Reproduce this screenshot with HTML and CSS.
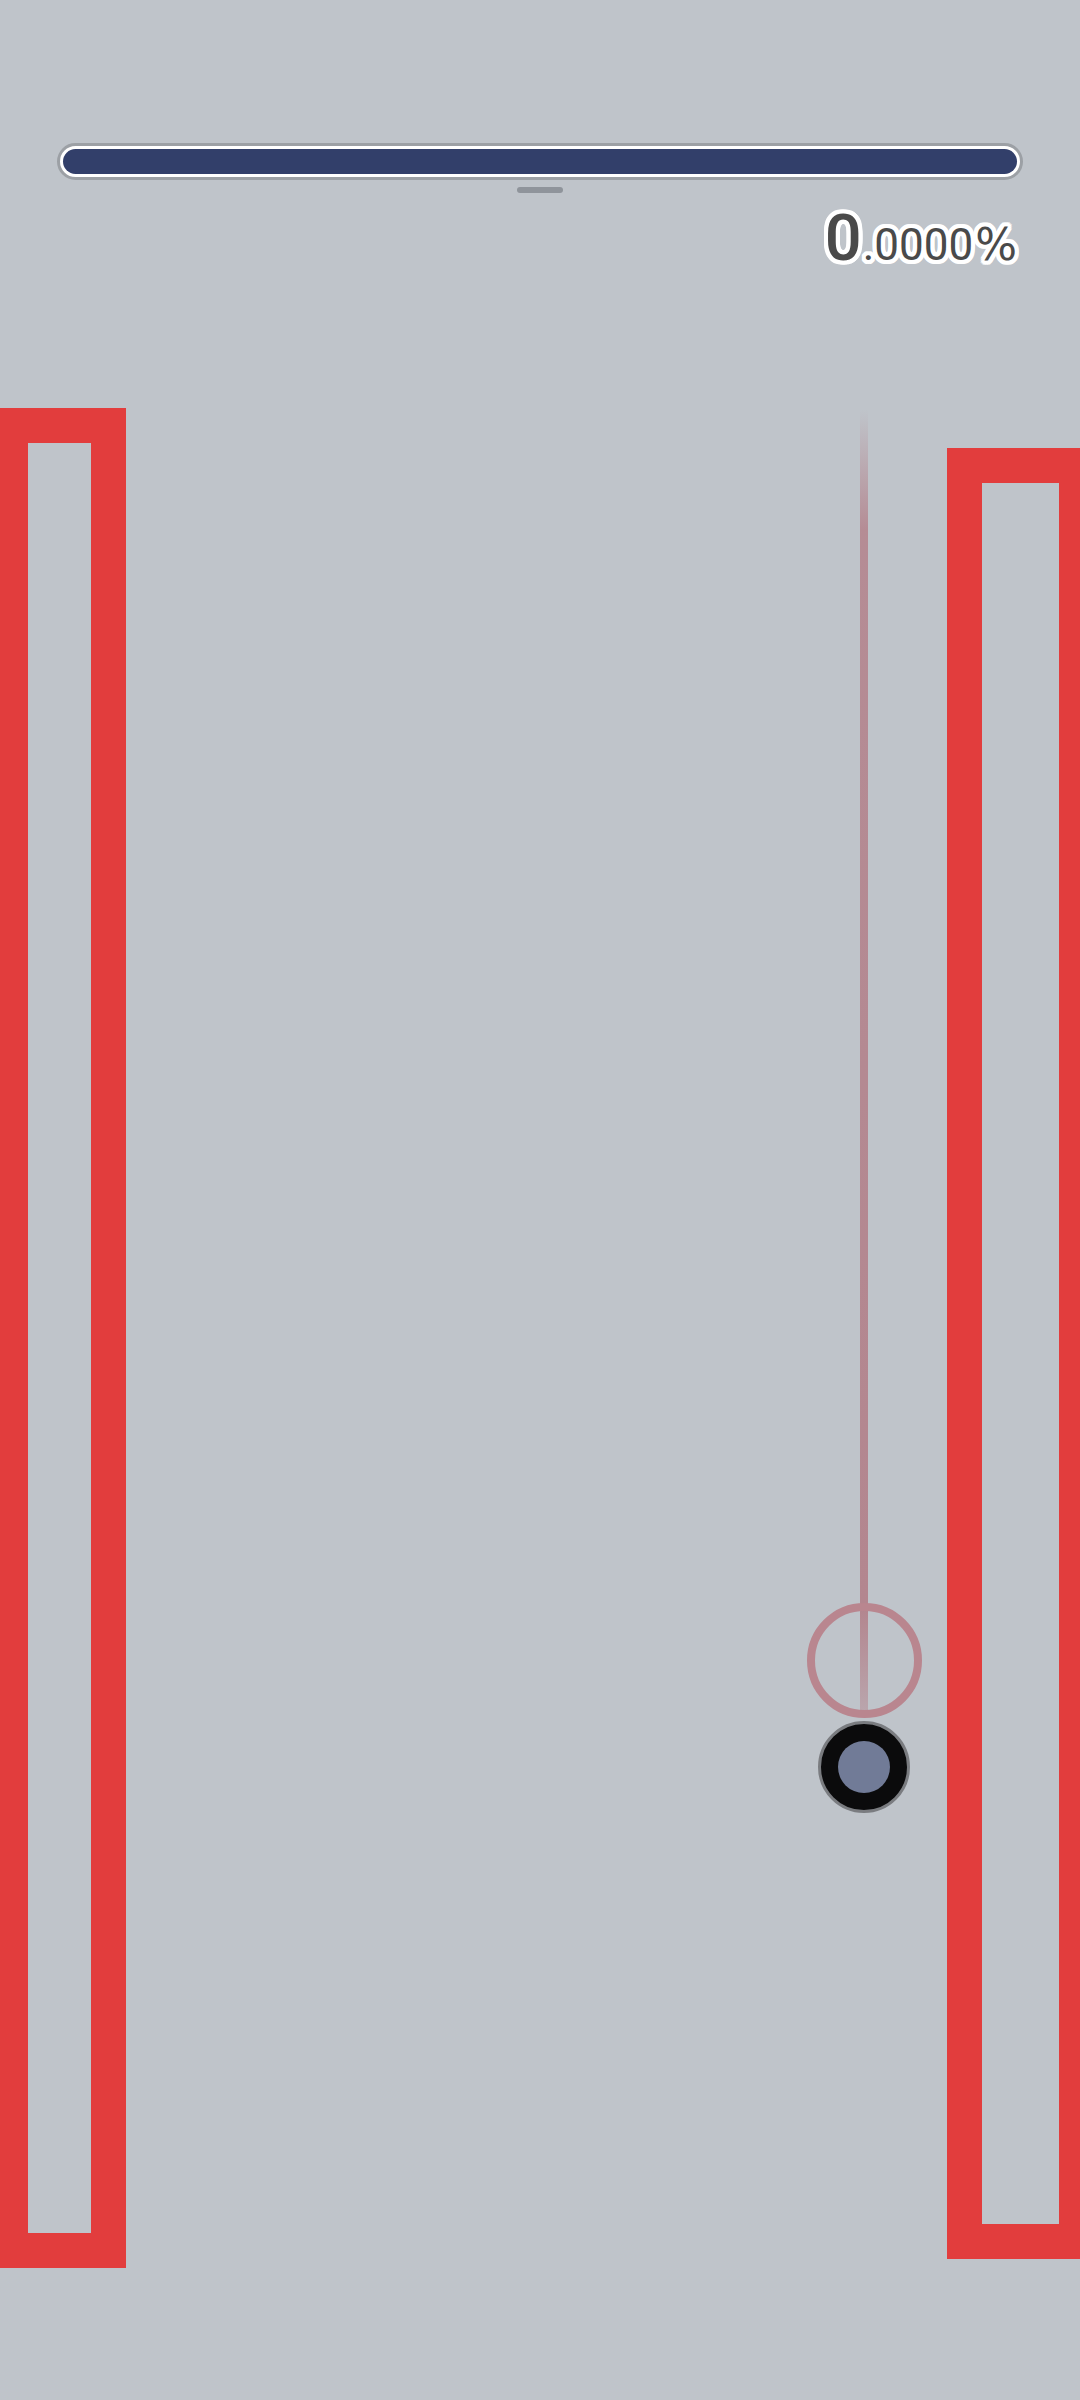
FILE: index.html
```html
<!DOCTYPE html>
<html>
<head>
<meta charset="utf-8">
<link rel="stylesheet" href="styles.css">
</head>
<body>
<div class="screen">
  <header class="hud">
    <div class="bar"><div class="fill"></div></div>
    <div class="handle"></div>
    <div class="score"><span class="big">0</span><span class="small">.0000</span><span class="pct">%</span></div>
  </header>
  <main class="field">
    <div class="hold hold-left"></div>
    <div class="hold hold-right"></div>
    <div class="trail"></div>
    <div class="target"></div>
    <div class="cursor"><div class="cursor-core"></div></div>
  </main>
</div>
</body>
</html>
```
FILE: styles.css
```css
html, body {
  margin: 0;
  padding: 0;
}
body {
  background: #bfc4ca;
  width: 1080px;
  height: 2400px;
  overflow: hidden;
  font-family: Roboto, "Noto Sans", sans-serif;
}
.screen {
  position: relative;
  width: 1080px;
  height: 2400px;
}
.hud {
  padding: 143px 57px 0 57px;
  display: flex;
  flex-direction: column;
}
.bar {
  height: 37px;
  box-sizing: border-box;
  border: 3px solid #9ca0a5;
  border-radius: 19px;
  background: #ffffff;
  padding: 3px;
}
.fill {
  height: 100%;
  background: #323f6a;
  border-radius: 13px;
}
.handle {
  align-self: center;
  width: 46px;
  height: 6px;
  margin-top: 7px;
  border-radius: 3px;
  background: #8f949b;
}
.score {
  display: flex;
  justify-content: flex-end;
  align-items: baseline;
  padding-right: 6px;
  margin-top: 13px;
  color: #4a4a4a;
  line-height: 1;
  font-weight: 500;
  text-shadow:
    4px 0 0 #fff, -4px 0 0 #fff, 0 4px 0 #fff, 0 -4px 0 #fff,
    3px 3px 0 #fff, -3px 3px 0 #fff, 3px -3px 0 #fff, -3px -3px 0 #fff,
    4px 2px 0 #fff, -4px 2px 0 #fff, 4px -2px 0 #fff, -4px -2px 0 #fff,
    2px 4px 0 #fff, -2px 4px 0 #fff, 2px -4px 0 #fff, -2px -4px 0 #fff;
}
.big {
  font-size: 65px;
  margin-right: 1px;
}
.small {
  font-size: 44px;
  font-weight: 400;
}
.pct {
  font-family: "DejaVu Sans", sans-serif;
  font-weight: 400;
  font-size: 44px;
  margin-left: 2px;
}
.field {
  position: absolute;
  inset: 0;
}
.hold {
  position: absolute;
  box-sizing: border-box;
  border: 35px solid #e23d3d;
}
.hold-left {
  left: -7px;
  top: 408px;
  width: 133px;
  height: 1860px;
}
.hold-right {
  left: 947px;
  top: 448px;
  width: 147px;
  height: 1811px;
}
.trail {
  position: absolute;
  left: 860px;
  top: 410px;
  width: 8px;
  height: 1300px;
  background: linear-gradient(to bottom, rgba(180,134,143,0) 0px, rgba(180,134,143,0.9) 120px, #b3868f 1200px, rgba(180,134,143,0.5) 1300px);
}
.target {
  position: absolute;
  left: 807px;
  top: 1603px;
  width: 115px;
  height: 115px;
  box-sizing: border-box;
  border: 8px solid #b9868f;
  border-radius: 50%;
}
.cursor {
  position: absolute;
  left: 818px;
  top: 1721px;
  width: 92px;
  height: 92px;
  box-sizing: border-box;
  border: 3px solid #7a7c80;
  border-radius: 50%;
  background: #0b0b0c;
  display: flex;
  align-items: center;
  justify-content: center;
}
.cursor-core {
  width: 52px;
  height: 52px;
  border-radius: 50%;
  background: #717b97;
}
```
